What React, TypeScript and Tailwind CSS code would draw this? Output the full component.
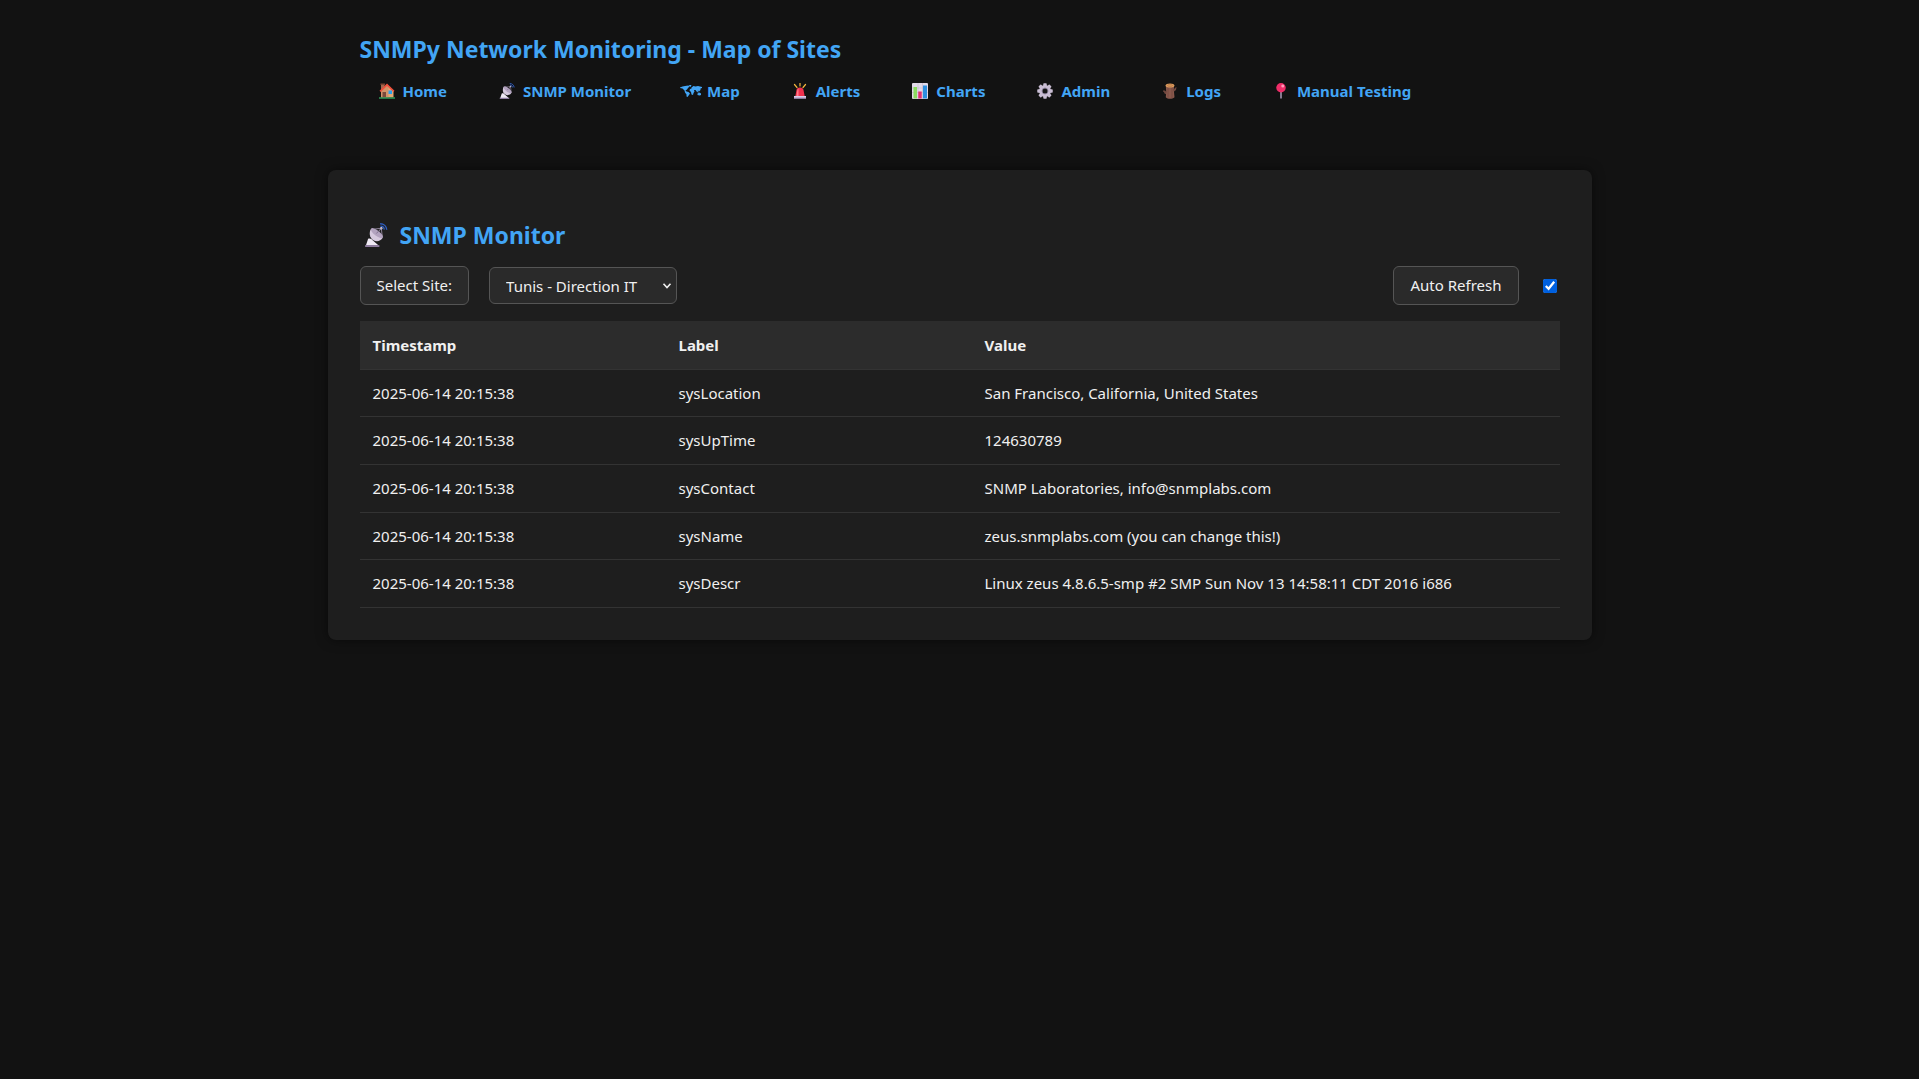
import { useState } from "react";
import type { ReactNode } from "react";

type IconProps = { className?: string };

function HouseIcon({ className = "" }: IconProps) {
  return (
    <svg viewBox="0 0 32 32" className={className} aria-hidden="true">
      <path d="M4 2h7v12H4z" fill="#a3674c" />
      <path d="M3 1h9v3H3z" fill="#7d4533" />
      <path d="M16 4 29 17v12H4V17z" fill="#e0a878" />
      <path d="M4 17 16 5l3 4v20H4z" fill="#d2946a" />
      <path d="M16 1 31 15.500l-2.500 2.500L16 6 3.500 18 1 15.500z" fill="#f0503c" />
      <path d="M7 18h7v11H7z" fill="#7c4a3c" />
      <path d="M19 15h7v7h-7z" fill="#2aa0f0" />
      <path d="M0 28.500h32v3H0z" fill="#2f9a5a" />
    </svg>
  );
}

function DishIcon({ className = "" }: IconProps) {
  return (
    <svg viewBox="0 0 32 32" className={className} aria-hidden="true">
      <path d="M21.500 1C26.500 1 30 4.500 30.300 9M22 4.200c2.800 0 4.800 2 5 4.600" fill="none" stroke="#2f5fc4" strokeWidth="1.800" />
      <path d="M10 8.500 23 7l1.500 12M23 7l-6 8" fill="none" stroke="#8a7f94" strokeWidth="1.300" />
      <circle cx="23" cy="7" r="1.600" fill="#d8d0e0" />
      <path d="M9.500 7.500C6.500 12 7 19 12 22.500s10 1.500 13-3z" fill="#d6c9de" />
      <ellipse cx="17.200" cy="13.500" rx="9.800" ry="3.600" fill="#b3a3bf" transform="rotate(38 17.200 13.500)" />
      <path d="M23 7l-6.500 7" stroke="#7d718a" strokeWidth="1.200" />
      <path d="M5.500 21c2.500-1 4.500 0 6 2l8 7H2.500z" fill="#f0eaf5" />
      <path d="M1.500 29.500h19V32h-19z" fill="#8f7ca0" />
    </svg>
  );
}

function WorldIcon({ className = "" }: IconProps) {
  return (
    <svg viewBox="0 0 44 24" className={className} fill="#42a5f5" aria-hidden="true">
      <path d="M0 5l5-2 5-1 7-1 2 2-3 3-2 3-3 2 2 2 4 1 3 3-2 3-3 4-2-1 0-4-3-4-1-4-4-4-5-1z" />
      <path d="M18 0h5l-2 4-2-1z" />
      <path d="M23 5l4-3 4 1 5-1 8 2 0 2-3 1 0 3-3 3-2-2-2 3-3-4-3 0 1 3-2 3-1 4-3-1-1-5-3-3 1-3 3-1z" />
      <path d="M35 17l4-2 3 2 0 3-3 1-4-1zM34 12l4 2-1 1-3-1z" />
    </svg>
  );
}

function SirenIcon({ className = "" }: IconProps) {
  return (
    <svg viewBox="0 0 32 32" className={className} aria-hidden="true">
      <path d="M16 0v6M5 3l5 6M27 3l-5 6" stroke="#f3b63c" strokeWidth="2.400" strokeLinecap="round" />
      <path d="M16 9c-4.500 0-6.500 2-7 5L6.500 27h19L23 14c-.500-3-2.500-5-7-5z" fill="#f2304e" />
      <path d="M13 11c-2 1-2.500 3-3 8l-1 7h4z" fill="#ff7a86" />
      <path d="M4 26h24v5H4z" fill="#d9cbe8" />
      <path d="M4 29h24v2H4z" fill="#a58fbd" />
    </svg>
  );
}

function ChartIcon({ className = "" }: IconProps) {
  return (
    <svg viewBox="0 0 32 32" className={className} aria-hidden="true">
      <rect width="32" height="32" rx="2" fill="#e2dae8" />
      <path d="M0 10h32M0 19h32M12 0v32M21 0v32" stroke="#bcb1c6" strokeWidth="1" />
      <path d="M3 8h7v23H3z" fill="#8bdc5e" />
      <path d="M12.500 17h7v14h-7z" fill="#e4306f" />
      <path d="M22 5h8v26h-8z" fill="#2e8fe0" />
    </svg>
  );
}

function GearIcon({ className = "" }: IconProps) {
  return (
    <svg viewBox="0 0 32 32" className={className} aria-hidden="true">
      <g fill="#c9bdd3">
        <rect x="12.500" y="0.500" width="7" height="31" rx="1.500" />
        <rect x="12.500" y="0.500" width="7" height="31" rx="1.500" transform="rotate(45 16 16)" />
        <rect x="12.500" y="0.500" width="7" height="31" rx="1.500" transform="rotate(90 16 16)" />
        <rect x="12.500" y="0.500" width="7" height="31" rx="1.500" transform="rotate(135 16 16)" />
        <circle cx="16" cy="16" r="12" />
      </g>
      <circle cx="16" cy="16" r="6" fill="none" stroke="#968aa6" strokeWidth="2" />
      <circle cx="16" cy="16" r="5" fill="#151515" />
    </svg>
  );
}

function LogIcon({ className = "" }: IconProps) {
  return (
    <svg viewBox="0 0 32 32" className={className} aria-hidden="true">
      <path d="M2 15l4 0 3 3v5l-4-2-1-3-2-1zM29 8l-2 1-3 3v5l4-3z" fill="#70483f" />
      <path d="M7.500 4h17l-1 9 1.500 15.500c-5 4-13 4-17.500 0l1-10z" fill="#89584c" />
      <path d="M12 8v21M20 8v22" stroke="#70463d" strokeWidth="1.500" />
      <ellipse cx="16" cy="5" rx="8.700" ry="4" fill="#d99a5c" />
      <ellipse cx="16" cy="5" rx="5" ry="1.800" fill="none" stroke="#b3713f" strokeWidth="1.200" />
    </svg>
  );
}

function PinIcon({ className = "" }: IconProps) {
  return (
    <svg viewBox="0 0 32 32" className={className} aria-hidden="true">
      <path d="M14 17h4v13l-2 2-2-2z" fill="#85798f" />
      <circle cx="16" cy="9.500" r="9.500" fill="#ef2d68" />
      <circle cx="19.500" cy="6" r="3" fill="#ff9dbb" />
    </svg>
  );
}

const links: { label: string; icon: ReactNode }[] = [
  { label: "Home", icon: <HouseIcon className="size-4" /> },
  { label: "SNMP Monitor", icon: <DishIcon className="size-4" /> },
  { label: "Map", icon: <WorldIcon className="h-3 w-[22px]" /> },
  { label: "Alerts", icon: <SirenIcon className="size-4" /> },
  { label: "Charts", icon: <ChartIcon className="size-4" /> },
  { label: "Admin", icon: <GearIcon className="size-4" /> },
  { label: "Logs", icon: <LogIcon className="size-4" /> },
  { label: "Manual Testing", icon: <PinIcon className="size-4" /> },
];

const rows = [
  { label: "sysLocation", value: "San Francisco, California, United States" },
  { label: "sysUpTime", value: "124630789" },
  { label: "sysContact", value: "SNMP Laboratories, info@snmplabs.com" },
  { label: "sysName", value: "zeus.snmplabs.com (you can change this!)" },
  { label: "sysDescr", value: "Linux zeus 4.8.6.5-smp #2 SMP Sun Nov 13 14:58:11 CDT 2016 i686" },
];

export default function App() {
  const [autoRefresh, setAutoRefresh] = useState(true);

  return (
    <div className="min-h-screen bg-[#121212] font-['Segoe_UI','Noto_Sans',sans-serif] text-[15px] leading-6 text-[#f0f0f0]">
      <header className="mx-auto max-w-[1264px] px-8 pt-[31px]">
        <h1 className="text-[23px] leading-9 font-bold text-[#42a5f5]">SNMPy Network Monitoring - Map of Sites</h1>
        <nav className="mt-3 flex flex-wrap gap-[17px]">
          {links.map((link) => (
            <a key={link.label} href="#" className="flex items-center gap-[5px] px-4 font-bold text-[#42a5f5]">
              <span className="flex w-[22px] justify-center">{link.icon}</span>
              {link.label}
            </a>
          ))}
        </nav>
      </header>

      <main className="mx-auto mt-[67px] max-w-[1264px] rounded-lg bg-[#1e1e1e] p-8 shadow-[0_0_12px_rgba(0,0,0,0.5)]">
        <h2 className="mt-[17px] mb-[15px] flex items-center gap-2 text-[23px] leading-8 font-bold text-[#42a5f5]">
          <span className="flex w-8 justify-center">
            <DishIcon className="size-6" />
          </span>
          SNMP Monitor
        </h2>

        <div className="flex items-center justify-between">
          <div className="flex items-center gap-5">
            <label htmlFor="site" className="rounded-md border border-[#555] bg-[#2a2a2a] px-4 py-1.5 leading-[25px]">
              Select Site:
            </label>
            <div className="relative">
              <select
                id="site"
                className="h-[37px] w-[188px] appearance-none rounded-md border border-[#555] bg-[#2a2a2a] pr-7 pl-4"
              >
                <option>Tunis - Direction IT</option>
              </select>
              <svg
                viewBox="0 0 10 6"
                className="pointer-events-none absolute top-4 right-[5px] h-1.5 w-2.5"
                fill="none"
                stroke="#f0f0f0"
                strokeWidth="1.600"
                aria-hidden="true"
              >
                <path d="M1.500 .800 5 4.500 8.500 .800" />
              </svg>
            </div>
          </div>
          <div className="flex items-center gap-6">
            <label htmlFor="refresh" className="rounded-md border border-[#555] bg-[#2a2a2a] px-4 py-1.5 leading-[25px]">
              Auto Refresh
            </label>
            <input
              id="refresh"
              type="checkbox"
              checked={autoRefresh}
              onChange={(e) => setAutoRefresh(e.target.checked)}
              className="mr-[3px] size-3.5 accent-[#0060df]"
            />
          </div>
        </div>

        <table className="mt-4 w-full table-fixed border-collapse text-left">
          <thead>
            <tr className="h-12 border-b border-[#333] bg-[#2c2c2c]">
              <th className="w-[306px] px-[13px] font-bold">Timestamp</th>
              <th className="w-[306px] px-[13px] font-bold">Label</th>
              <th className="px-[13px] font-bold">Value</th>
            </tr>
          </thead>
          <tbody>
            {rows.map((row) => (
              <tr key={row.label} className="h-12 border-b border-[#333] nth-[3n+1]:h-[47px]">
                <td className="px-[13px]">2025-06-14 20:15:38</td>
                <td className="px-[13px]">{row.label}</td>
                <td className="px-[13px]">{row.value}</td>
              </tr>
            ))}
          </tbody>
        </table>
      </main>
    </div>
  );
}
